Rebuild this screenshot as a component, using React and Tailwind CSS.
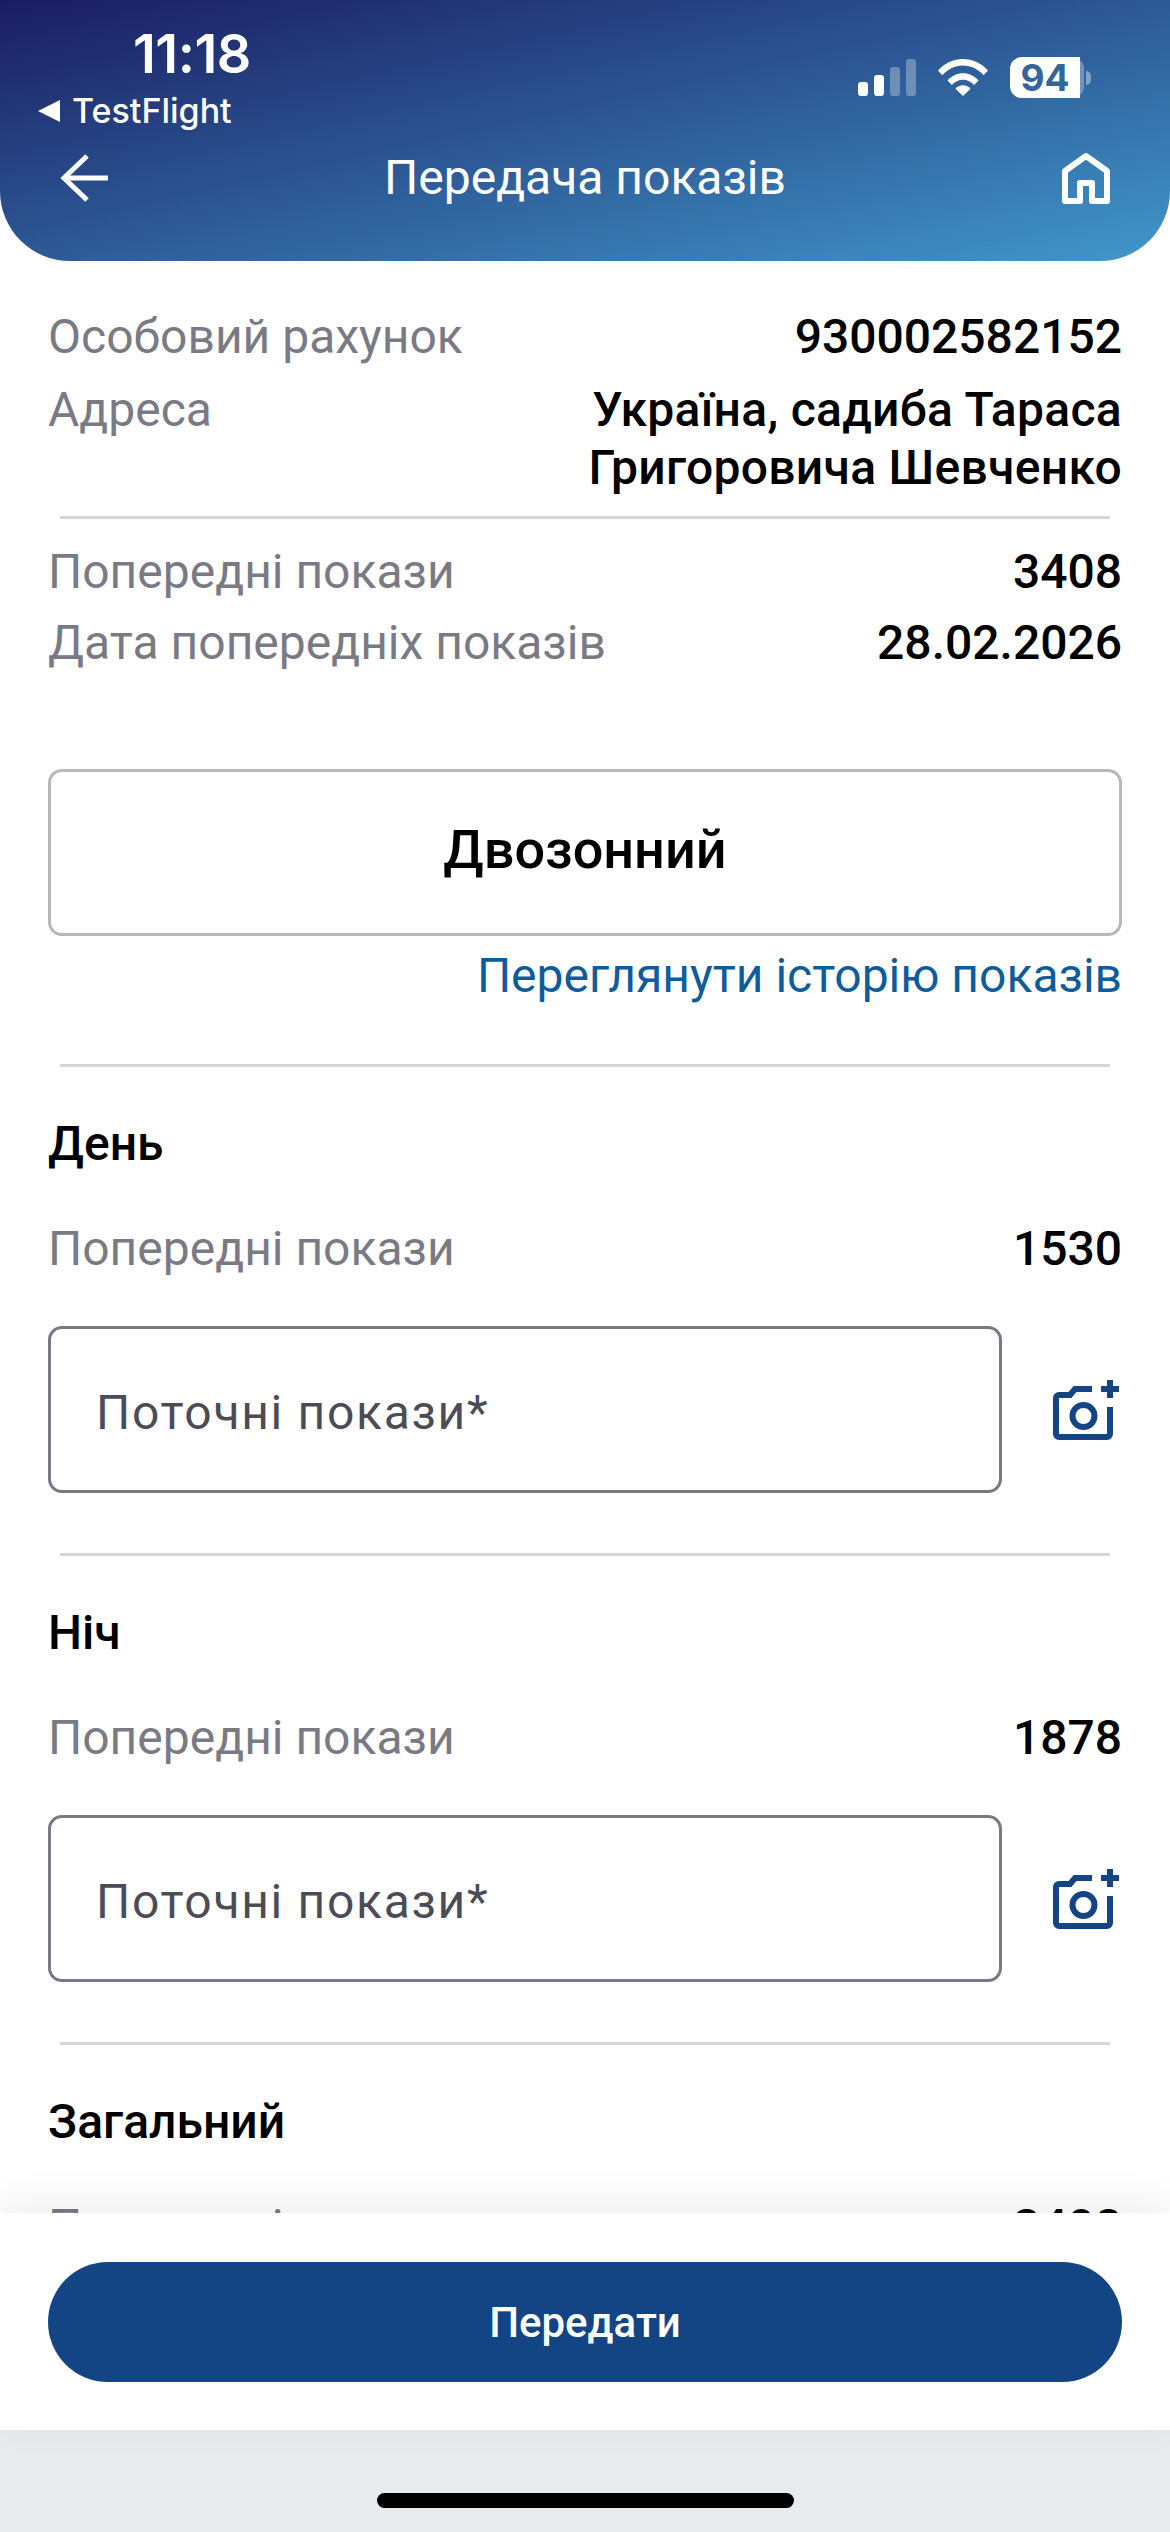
const FONT = "font-['Roboto',sans-serif]";

const SignalIcon = () => (
  <svg width="58" height="37" viewBox="0 0 58 37" fill="#fff">
    <rect x="0" y="23" width="10" height="14" rx="3" />
    <rect x="16" y="16" width="10" height="21" rx="3" />
    <rect x="32" y="8" width="10" height="29" rx="3" opacity="0.3" />
    <rect x="48" y="0" width="10" height="37" rx="3" opacity="0.3" />
  </svg>
);

const WifiIcon = () => (
  <svg width="50" height="37" viewBox="0 0 50 37" fill="#fff">
    <path d="M0 11.5C6.500 4.200 15.300 0 25 0s18.500 4.200 25 11.500l-4.300 4.700C40.300 10.200 33 6.500 25 6.500S9.700 10.200 4.300 16.200z" />
    <path d="M9.500 21.500C13.500 17 19 14.300 25 14.300s11.500 2.700 15.500 7.200l-4.400 4.600C33.300 22.800 29.300 20.800 25 20.800s-8.300 2-11.100 5.300z" />
    <path d="M17.500 29.800C19.400 27.600 22 26.300 25 26.300s5.600 1.300 7.500 3.500L25 37z" />
  </svg>
);

const BatteryIcon = () => (
  <div className="flex items-center">
    <div className="w-[74px] h-[41px] rounded-[12px] bg-white/30">
      <div className="w-[70px] h-full rounded-l-[12px] bg-white flex items-center justify-center">
        <span className="font-['Inter',sans-serif] font-bold text-[37px] leading-[41px] text-[#34659c]">94</span>
      </div>
    </div>
    <div className="w-[5px] h-[14px] ml-[2px] rounded-r-full bg-white/40" />
  </div>
);

const BackIcon = () => (
  <svg width="48" height="48" viewBox="0 0 48 48" fill="none" stroke="#fff" strokeWidth="5">
    <path d="M48 24H4" />
    <path d="M27 2 4 24l23 22" />
  </svg>
);

const HomeIcon = () => (
  <svg width="48" height="52" viewBox="0 0 48 52" fill="none" stroke="#fff" strokeWidth="6" strokeLinejoin="round">
    <path d="M3 19 24 4l21 15v30H30V31H18v18H3z" />
  </svg>
);

const CameraPlusIcon = () => (
  <svg width="66" height="60" viewBox="0 0 66 60" fill="none" stroke="#134584" strokeWidth="6">
    <path d="M39 9H22l-5 6H6a3 3 0 0 0-3 3v36a3 3 0 0 0 3 3h48a3 3 0 0 0 3-3V27" />
    <circle cx="30.500" cy="36" r="11" />
    <path d="M48 9h18M57 0v18" />
  </svg>
);

const Divider = ({ className = "" }) => (
  <div className={`mx-3 h-[3px] bg-[#d6d6d8] ${className}`} />
);

const Row = ({ label, value, className = "", valueClass = "" }) => (
  <div className={`flex justify-between items-start ${className}`}>
    <span className="text-[#7a7a85] text-[48px] leading-[58px]">{label}</span>
    <span className={`text-black font-medium text-[48px] leading-[58px] text-right ${valueClass}`}>{value}</span>
  </div>
);

const sections = [
  { title: "День", prev: "1530" },
  { title: "Ніч", prev: "1878" },
];

const Section = ({ title, prev }) => (
  <div>
    <div className="mt-[48px] text-black font-medium text-[48px] leading-[58px]">{title}</div>
    <Row label="Попередні покази" value={prev} className="mt-[47px]" />
    <div className="mt-[48px] flex items-center justify-between">
      <div className="w-[954px] h-[167px] border-[3px] border-[#777a85] rounded-[14px] pl-[45px] pt-[6px] flex items-center">
        <span className="text-[#4b4c55] text-[48px] tracking-[1.7px]">Поточні покази*</span>
      </div>
      <div className="mr-[3px]">
        <CameraPlusIcon />
      </div>
    </div>
    <Divider className="mt-[60px]" />
  </div>
);

export default function App() {
  return (
    <div className={`${FONT} w-[1170px] h-[2532px] bg-white flex flex-col overflow-hidden`}>
      <header className="h-[261px] shrink-0 rounded-b-[70px] bg-gradient-to-br from-[#1b1c62] to-[#4198ca] text-white px-[60px]">
        <div className="h-[152px] flex justify-between items-start">
          <div className="-ml-[22px]">
            <div className="mt-[27px] ml-[95px] font-['Inter',sans-serif] font-semibold text-[54px] leading-[54px] tracking-[-0.5px]">
              11:18
            </div>
            <div className="mt-[10px] flex items-center gap-[12px]">
              <div className="w-0 h-0 border-y-[11px] border-y-transparent border-r-[22px] border-r-white" />
              <span className="font-['Inter',sans-serif] font-medium text-[34px] leading-[40px]">TestFlight</span>
            </div>
          </div>
          <div className="mt-[57px] mr-[19px] flex items-center gap-[22px]">
            <SignalIcon />
            <WifiIcon />
            <BatteryIcon />
          </div>
        </div>
        <div className="h-[52px] flex items-center justify-between">
          <BackIcon />
          <h1 className="font-normal text-[48px] leading-[58px]">Передача показів</h1>
          <HomeIcon />
        </div>
      </header>

      <main className="flex-1 min-h-0 overflow-hidden px-[48px] pt-[47px]">
        <Row label="Особовий рахунок" value="930002582152" />
        <Row
          label="Адреса"
          value={<>Україна, садиба Тараса<br />Григоровича Шевченко</>}
          className="mt-[15px]"
          valueClass="tracking-[0.3px]"
        />
        <Divider className="mt-[19px]" />
        <Row label="Попередні покази" value="3408" className="mt-[24px]" />
        <Row label="Дата попередніх показів" value="28.02.2026" className="mt-[13px]" />

        <div className="mt-[97px] h-[167px] border-[3px] border-[#b8b8b8] rounded-[14px] pb-[6px] flex items-center justify-center">
          <span className="text-black font-medium text-[54px]">Двозонний</span>
        </div>
        <div className="mt-[11px] text-right text-[#0f5c9c] text-[48px] leading-[58px]">
          Переглянути історію показів
        </div>
        <Divider className="mt-[59px]" />

        {sections.map((s) => (
          <Section key={s.title} title={s.title} prev={s.prev} />
        ))}

        <div className="mt-[48px] text-black font-medium text-[48px] leading-[58px]">Загальний</div>
        <Row label="Попередні покази" value="3408" className="mt-[47px]" />
      </main>

      <footer className="relative shrink-0 h-[217px] bg-white px-[48px] pt-[49px] shadow-[0_-10px_40px_rgba(0,0,0,0.07)]">
        <button className="w-full h-[120px] rounded-full bg-[#134584] text-white font-medium text-[42px]">
          Передати
        </button>
      </footer>
      <div className="shrink-0 h-[102px] bg-[#e8ebee] flex justify-center pt-[63px]">
        <div className="w-[417px] h-[15px] rounded-full bg-black" />
      </div>
    </div>
  );
}
